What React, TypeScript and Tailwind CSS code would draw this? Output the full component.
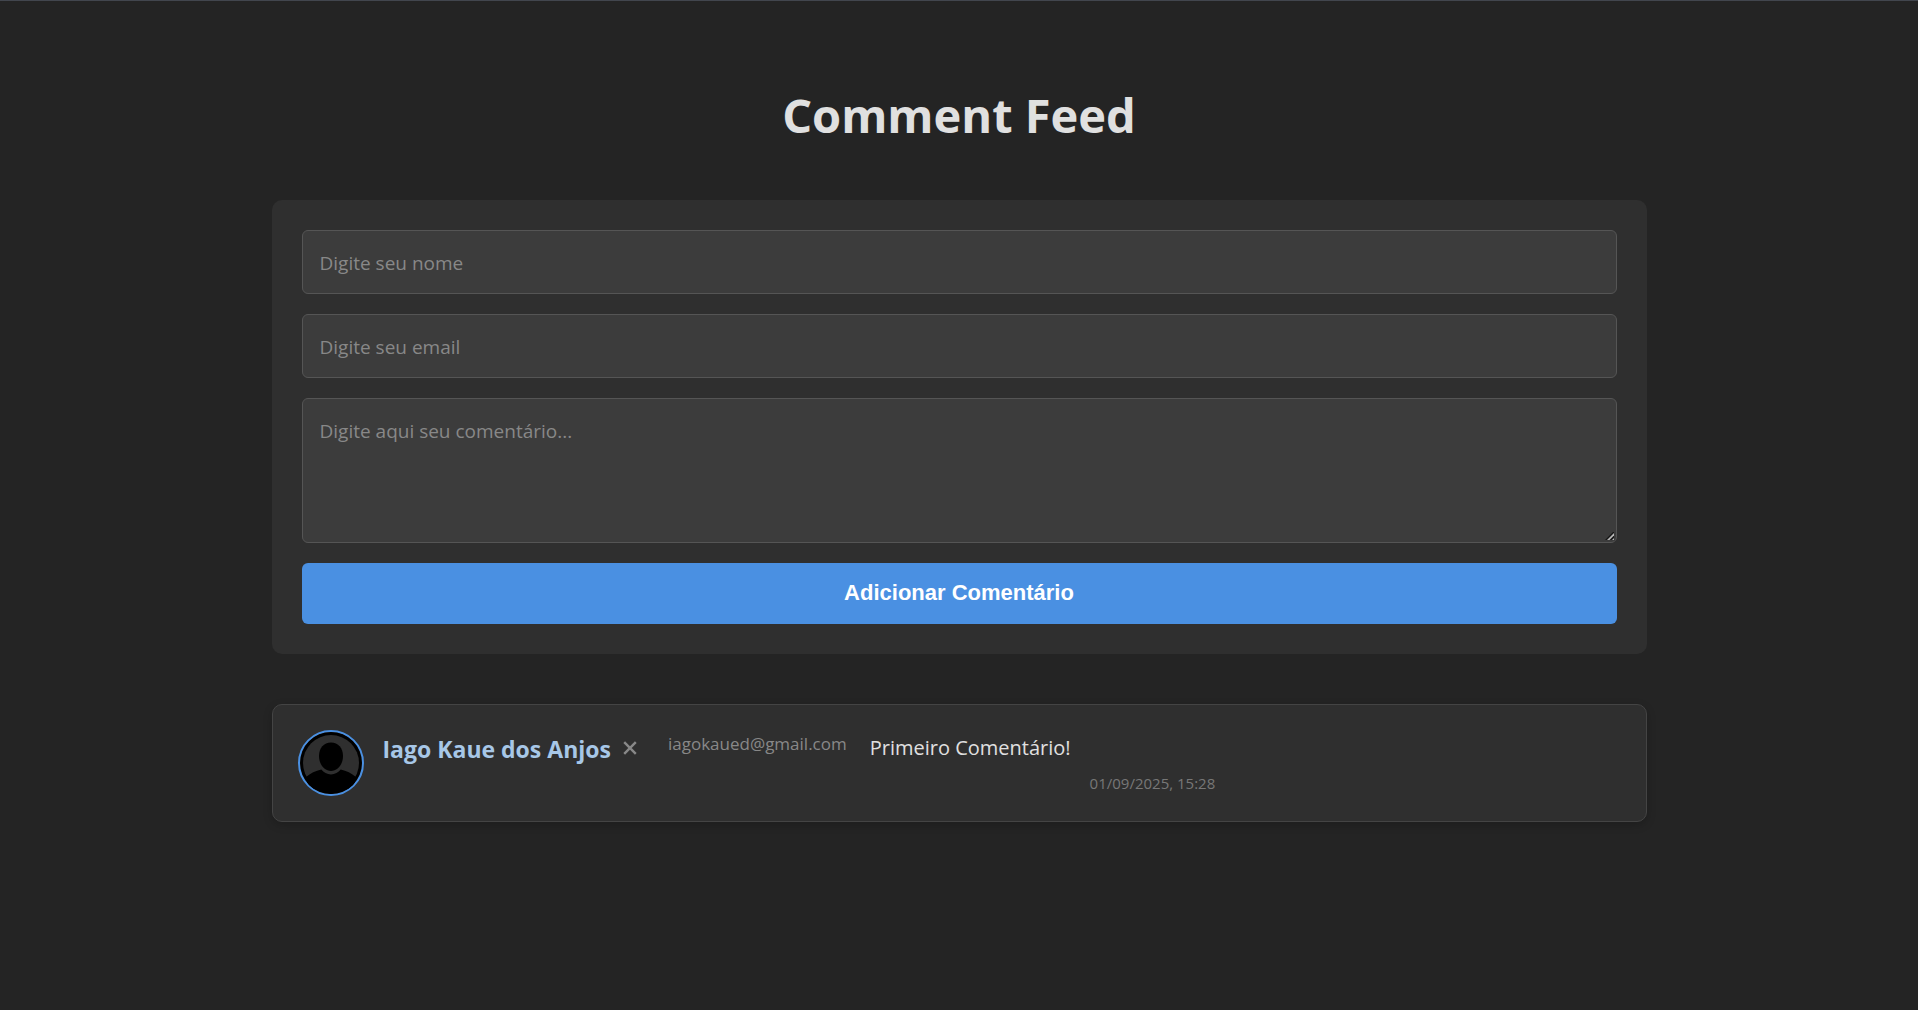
import React from "react";

const fieldClass =
  "block w-full rounded-md border border-[#555] bg-[#3c3c3c] px-[17px] text-[19px] leading-8 text-[#e0e0e0] placeholder:text-[#888] placeholder:opacity-100 outline-none focus:border-[#4a90e2]";

function Avatar() {
  return (
    <svg
      className="size-[66px] shrink-0 rounded-full border-2 border-[#4a90e2]"
      viewBox="0 0 62 62"
      role="img"
      aria-label="Avatar"
    >
      <circle cx="31" cy="31" r="31" fill="#000" />
      <circle cx="31" cy="31" r="28" fill="#2f2f2f" />
      <path
        d="M31 10.500c7.200 0 12 5.600 12 13.500 0 8.300-5.500 15-12 15s-12-6.700-12-15c0-7.900 4.800-13.500 12-13.500z"
        fill="#000"
      />
      <path
        d="M6 45c4.500-3.600 9.500-6.200 15.300-7.400 2.300 3 5.800 4.900 9.700 4.900s7.400-1.900 9.700-4.900C46.500 38.800 51.500 41.400 56 45l-2 10-23 7-23-7z"
        fill="#000"
      />
    </svg>
  );
}

function ResizeGrip() {
  return (
    <svg className="pointer-events-none absolute right-0.5 bottom-0.5 size-2.5" viewBox="0 0 10 10" aria-hidden="true">
      <path d="M0 10L10 0V10z" fill="#3c3c3c" />
      <path d="M0 9L8 1h1v8z" fill="#161616" />
      <path d="M2 9L9 2v2.500L4.500 9z" fill="#b8b8b8" />
      <path d="M7 9l2-2v2z" fill="#b8b8b8" />
    </svg>
  );
}

function CommentForm() {
  return (
    <form className="flex flex-col gap-5 rounded-[10px] bg-[#2f2f2f] p-[30px]" onSubmit={(e) => e.preventDefault()}>
      <input type="text" aria-label="Nome" placeholder="Digite seu nome" className={`${fieldClass} pt-4 pb-3.5`} />
      <input type="email" aria-label="Email" placeholder="Digite seu email" className={`${fieldClass} pt-4 pb-3.5`} />
      <div className="relative">
        <textarea
          aria-label="Comentário"
          placeholder="Digite aqui seu comentário..."
          className={`${fieldClass} h-[145px] resize-y py-4`}
        />
        <ResizeGrip />
      </div>
      <button
        type="submit"
        className="rounded-md bg-[#4a90e2] px-5 pt-4 pb-[17px] font-['Liberation_Sans',Arial,sans-serif] text-[22px] leading-7 font-bold text-white"
      >
        Adicionar Comentário
      </button>
    </form>
  );
}

function Comment() {
  return (
    <article className="flex items-start gap-[19px] rounded-[10px] border border-[#444] bg-[#2f2f2f] p-[25px] shadow-[0_3px_10px_rgba(0,0,0,0.2)]">
      <Avatar />
      <header className="mr-3 flex items-start gap-3">
        <h2 className="text-[23px] leading-[38px] font-bold text-[#a7c7e7]">Iago Kaue dos Anjos</h2>
        <button type="button" aria-label="Remover comentário" className="flex h-9 w-3.5 items-center text-[#888]">
          <svg className="size-3.5" viewBox="0 0 14 14" fill="none" stroke="currentColor" strokeWidth="2.4">
            <path d="M1.200 1.200l11.600 11.600M12.800 1.200L1.200 12.800" />
          </svg>
        </button>
      </header>
      <span className="mr-1 text-[17px] leading-7 text-[#888]">iagokaued@gmail.com</span>
      <p className="text-[20px] leading-9 text-[#e0e0e0]">Primeiro Comentário!</p>
      <time dateTime="2025-09-01T15:28" className="pt-10 text-[15px] leading-[26px] text-[#777]">
        01/09/2025, 15:28
      </time>
    </article>
  );
}

export default function App() {
  return (
    <div className="min-h-screen border-t border-[#42464e] bg-[#242424] font-['Open_Sans','Noto_Sans',sans-serif]">
      <main className="mx-auto w-full max-w-[1375px] pt-[79px]">
        <h1 className="mb-[50px] text-center text-[47px] leading-[70px] font-bold text-[#e0e0e0]">Comment Feed</h1>
        <CommentForm />
        <section className="mt-[50px]" aria-label="Comentários">
          <Comment />
        </section>
      </main>
    </div>
  );
}
